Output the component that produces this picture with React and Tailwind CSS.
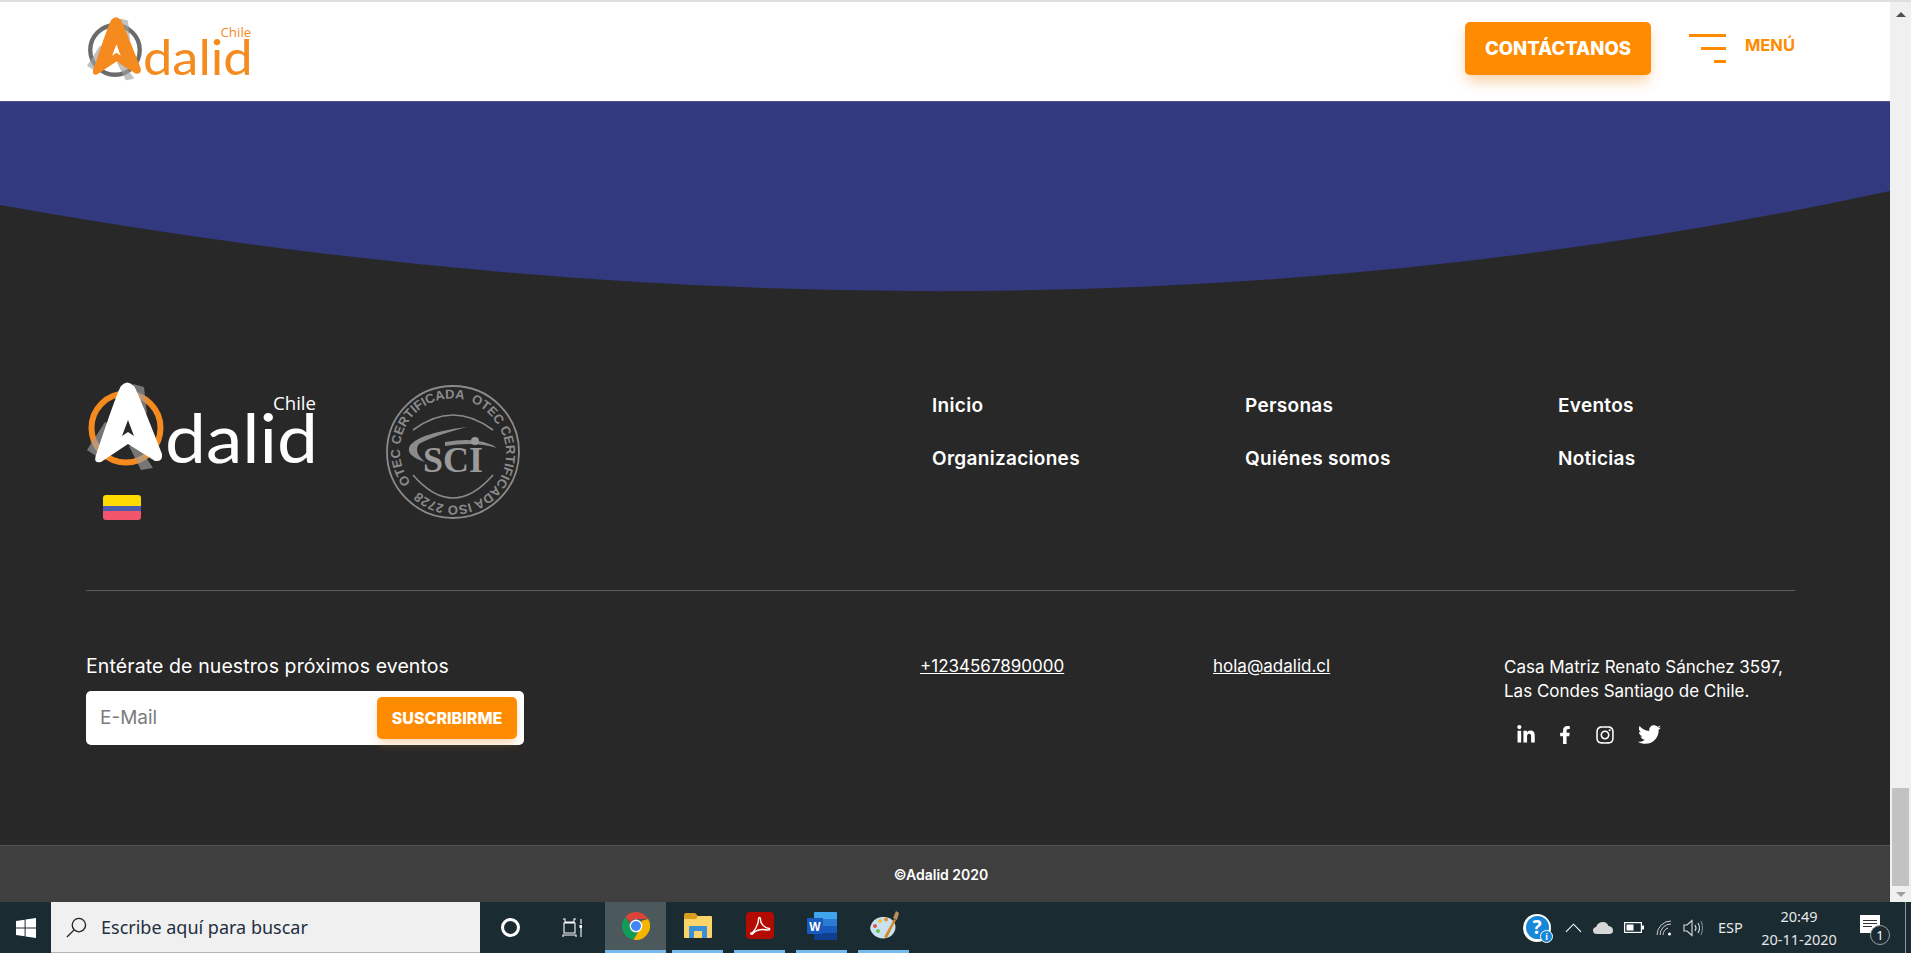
import React from "react";
import { FaLinkedinIn, FaFacebookF, FaInstagram, FaTwitter } from "react-icons/fa";

const navLinks = ["Inicio", "Personas", "Eventos", "Organizaciones", "Quiénes somos", "Noticias"];

function Logo({ className, ring, arrow, notch, word }) {
  return (
    <svg viewBox="0 0 230 92" className={className}>
      <circle cx="39" cy="46" r="34.5" fill="none" stroke={ring} strokeWidth="6" />
      <path d="M0 68 L18 40 L26 44 L12 76 Z" fill="#a0a0a0" opacity="0.65" />
      <path d="M46 2 L57 5 L60 32 L52 24 Z" fill="#a0a0a0" opacity="0.65" />
      <path d="M42 64 L50 62 L66 86 L54 88 Z" fill="#a0a0a0" opacity="0.65" />
      <path
        d="M34 4 Q40 -3 47 4 Q50 8 75 72 Q76 80 68 79 L41 62 L14 80 Q6 82 9 73 Q30 10 34 4 Z"
        fill={arrow}
      />
      <path d="M41 38 L47 54 L41 50 L35 54 Z" fill={notch} />
      <text x="78" y="81" fill={word} fontFamily="Lato, sans-serif" fontSize="68" textLength="153" lengthAdjust="spacingAndGlyphs">
        dalid
      </text>
      <text x="186" y="28" fill={word} fontFamily="'Open Sans', sans-serif" fontSize="18.5" textLength="43" lengthAdjust="spacingAndGlyphs">
        Chile
      </text>
    </svg>
  );
}

function SciSeal() {
  return (
    <svg viewBox="0 0 136 136" className="w-[136px] h-[136px]">
      <defs>
        <path id="seal-ring" d="M26 98.6 A52 52 0 1 1 110 37.4 A52 52 0 1 1 26 98.6" />
      </defs>
      <circle cx="68" cy="68" r="66" fill="none" stroke="#8b8b8b" strokeWidth="1.8" />
      <text fill="#8b8b8b" fontFamily="'Liberation Sans', sans-serif" fontSize="13" fontWeight="700" className="whitespace-pre">
        <textPath href="#seal-ring" textLength="322">OTEC CERTIFICADA  OTEC CERTIFICADA ISO 2728</textPath>
      </text>
      <path d="M28 46 Q68 16 108 46" fill="none" stroke="#8b8b8b" strokeWidth="1.6" />
      <path d="M28 91 Q68 137 108 91" fill="none" stroke="#8b8b8b" strokeWidth="1.6" />
      <path d="M24 64 Q28 50 82 43 Q48 52 34 60 Q28 68 40 78 Q22 72 24 64 Z" fill="#8b8b8b" />
      <path d="M60 58 Q95 52 112 64 Q90 57 60 62 Z" fill="#8b8b8b" />
      <text x="38" y="88" fill="#9a9a9a" fontFamily="'Liberation Serif', serif" fontWeight="700" fontSize="35" textLength="60" lengthAdjust="spacingAndGlyphs">
        SCI
      </text>
      <circle cx="90" cy="57" r="4" fill="#9a9a9a" />
    </svg>
  );
}

function WindowsIcon() {
  return (
    <svg viewBox="0 0 20 20" className="w-5 h-5" fill="#fff">
      <path d="M0 3 L8.6 1.7 V9.4 H0 Z M9.6 1.6 L20 0 V9.4 H9.6 Z M0 10.5 H8.6 V18.3 L0 17 Z M9.6 10.5 H20 V20 L9.6 18.4 Z" />
    </svg>
  );
}

function ChromeIcon() {
  return (
    <svg viewBox="0 0 28 28" className="w-7 h-7">
      <path d="M14 0 A14 14 0 0 1 26.1 7 H14 A7 7 0 0 0 7.9 10.5 L3.4 4.9 A14 14 0 0 1 14 0 Z" fill="#db4437" />
      <path d="M3.4 4.9 L9.9 16 A7 7 0 0 0 15 20.9 L11.5 27.8 A14 14 0 0 1 3.4 4.9 Z" fill="#0f9d58" />
      <path d="M26.1 7 A14 14 0 0 1 11.5 27.8 L17.9 17 A7 7 0 0 0 19 9 Z" fill="#f4b400" />
      <circle cx="14" cy="14" r="6.4" fill="#fff" />
      <circle cx="14" cy="14" r="5" fill="#4285f4" />
    </svg>
  );
}

function ExplorerIcon() {
  return (
    <svg viewBox="0 0 28 26" className="w-7 h-[26px]">
      <path d="M0 2 Q0 0 2 0 H11 L14 3 V8 H0 Z" fill="#d99e1f" />
      <path d="M0 6 H12 L14 3 H27 Q28 3 28 4 V24 Q28 25 27 25 H1 Q0 25 0 24 Z" fill="#fbd567" />
      <path d="M5 25 V14 Q5 13 6 13 H22 Q23 13 23 14 V25 H18 V18 H10 V25 Z" fill="#3a8fd6" />
      <path d="M10 21 H18 V25 H10 Z" fill="#fbd567" />
    </svg>
  );
}

function AcrobatIcon() {
  return (
    <svg viewBox="0 0 28 28" className="w-7 h-7">
      <rect width="28" height="27" rx="4" fill="#b30b00" />
      <path
        d="M5 21 C8 21 13 11 12.5 7 C12.3 5 14.6 5 14.5 7.5 C14.4 11 18 16 23 16.5 C24.5 17 23.5 18.5 21.5 18 C16 17 10 18 7 21.5 C6 23 4 22 5 21 Z"
        fill="none"
        stroke="#fff"
        strokeWidth="1.4"
      />
    </svg>
  );
}

function WordIcon() {
  return (
    <svg viewBox="0 0 30 28" className="w-[30px] h-7">
      <path d="M7 1 Q7 0 8 0 H29 Q30 0 30 1 V7 H7 Z" fill="#41a5ee" />
      <rect x="7" y="7" width="23" height="7" fill="#2b7cd3" />
      <rect x="7" y="14" width="23" height="7" fill="#185abd" />
      <path d="M7 21 H30 V27 Q30 28 29 28 H8 Q7 28 7 27 Z" fill="#103f91" />
      <rect x="0" y="6" width="16" height="16" rx="1" fill="#185abd" />
      <text x="8" y="18.5" textAnchor="middle" fill="#fff" fontFamily="'Liberation Sans', sans-serif" fontWeight="700" fontSize="12">
        W
      </text>
    </svg>
  );
}

function PaintIcon() {
  return (
    <svg viewBox="0 0 30 30" className="w-[30px] h-[30px]">
      <path d="M2 14 C5 6 15 4 22 8 C28 12 28 20 22 25 C17 29 8 28 4 23 C2 20 0 18 2 14 Z" fill="#c9e2ef" />
      <circle cx="6" cy="15" r="2" fill="#e0584d" />
      <circle cx="11" cy="10" r="2" fill="#e8c23c" />
      <circle cx="9" cy="20" r="2" fill="#6cbb54" />
      <circle cx="17" cy="8.5" r="2" fill="#e98a3b" />
      <path d="M15 26 L25 8 L27 9 L18 27 Z" fill="#d9862b" />
      <path d="M24 7 L27 0 L30 2 L28 9 Z" fill="#b98f5b" />
    </svg>
  );
}

function TaskbarApp({ children, active }) {
  return (
    <div className={`h-full flex items-center justify-center border-b-[3px] border-[#76b9ed] ${active ? "w-[61px] bg-[#4b585c] -mr-[5px]" : "w-[51px]"}`}>
      {children}
    </div>
  );
}

function Taskbar() {
  return (
    <div className="relative h-[51px] bg-[#1a2b31] flex items-center text-white font-['Noto_Sans',sans-serif] shrink-0">
      <div className="w-[51px] flex justify-center">
        <WindowsIcon />
      </div>
      <div className="w-[429px] h-full bg-[#f0f0f0] flex items-center pl-[15px] border-b border-[#b5b5b5]">
        <svg viewBox="0 0 22 22" className="w-[21px] h-[21px]" fill="none" stroke="#222" strokeWidth="1.4">
          <circle cx="13.5" cy="8.5" r="7" />
          <path d="M8.5 13.5 L1 21" />
        </svg>
        <span className="ml-[14px] text-[18px] text-[#1f2f3f]">Escribe aquí para buscar</span>
      </div>
      <div className="w-[61px] flex justify-center">
        <div className="w-[19px] h-[19px] rounded-full border-[3px] border-white" />
      </div>
      <div className="w-[64px] flex justify-center pr-[3px]">
        <svg viewBox="0 0 20 20" className="w-5 h-5" fill="none" stroke="#fff" strokeWidth="1.1">
          <path d="M1 1 H3 V4 H12 V1 H14 M2 5 H13 V15 H2 Z M1 19 V17 H14 V19 M19 1 V6 M19 10 V19" />
          <rect x="17.5" y="7" width="3" height="3" fill="#fff" stroke="none" />
        </svg>
      </div>
      <div className="h-full flex gap-[11px]">
        <TaskbarApp active>
          <ChromeIcon />
        </TaskbarApp>
        <TaskbarApp>
          <ExplorerIcon />
        </TaskbarApp>
        <TaskbarApp>
          <AcrobatIcon />
        </TaskbarApp>
        <TaskbarApp>
          <WordIcon />
        </TaskbarApp>
        <TaskbarApp>
          <PaintIcon />
        </TaskbarApp>
      </div>
      <div className="ml-auto flex items-center h-full pr-[31px]">
        <div className="relative w-[28px] h-[28px] rounded-full bg-white flex items-center justify-center mr-[14px]">
          <div className="w-[23px] h-[23px] rounded-full bg-[#1787d8] flex items-center justify-center text-[19px] font-bold leading-none">?</div>
          <div className="absolute -right-[2px] -bottom-[1px] w-[13px] h-[13px] rounded-full bg-[#1787d8] border border-white flex items-center justify-center text-[9px] font-bold leading-none">i</div>
        </div>
        <svg viewBox="0 0 18 10" className="w-[17px] h-[10px] mr-[11px]" fill="none" stroke="#fff" strokeWidth="1.2">
          <path d="M1 9 L9 1 L17 9" />
        </svg>
        <svg viewBox="0 0 20 12" className="w-5 h-3 mr-[11px]" fill="#d7d7d7">
          <path d="M4 12 Q0 12 0 8.5 Q0 5.5 3 5 Q5 0 10 0 Q14 0 15.5 4 Q20 4.5 20 8.5 Q20 12 16 12 Z" />
        </svg>
        <svg viewBox="0 0 20 11" className="w-5 h-[11px] mr-[12px]" fill="none" stroke="#fff" strokeWidth="1.2">
          <rect x="0.6" y="0.6" width="16.8" height="9.8" />
          <rect x="2.5" y="2.5" width="7" height="6" fill="#fff" stroke="none" />
          <rect x="18" y="3.5" width="2" height="4" fill="#fff" stroke="none" />
        </svg>
        <svg viewBox="0 0 16 16" className="w-4 h-4 mr-[11px]" fill="none" stroke="#cfcfcf" strokeWidth="1">
          <path d="M1 15 A14 14 0 0 1 15 1 M4 15 A11 11 0 0 1 15 4 M7 15 A8 8 0 0 1 12 8" />
          <circle cx="13.5" cy="14" r="1.5" fill="#fff" stroke="none" />
        </svg>
        <svg viewBox="0 0 20 18" className="w-5 h-[18px] mr-[15px]" fill="none" stroke="#dcdcdc" strokeWidth="1.1">
          <path d="M1 6 H4 L9 1.5 V16.5 L4 12 H1 Z" />
          <path d="M12 6 Q14 9 12 12 M15 4 Q18 9 15 14" />
          <path d="M18 2 Q21 9 18 16" stroke="#7b868a" />
        </svg>
        <span className="text-[14.5px] w-[43px] text-[#e8e8e8]">ESP</span>
        <div className="flex flex-col items-center text-[14.5px] leading-[23px] text-[#e8e8e8] w-[76px] mr-[23px] whitespace-nowrap">
          <span>20:49</span>
          <span>20-11-2020</span>
        </div>
        <div className="relative w-[20px] h-[18px] bg-white mb-[7px]">
          <div className="mt-[5px] mx-[3px] flex flex-col gap-[2px]">
            <div className="h-px bg-[#333]" />
            <div className="h-px bg-[#333]" />
            <div className="h-px w-2/3 bg-[#333]" />
          </div>
          <div className="absolute left-[10px] top-[10px] w-[20px] h-[20px] rounded-full bg-[#1a2b31] border border-[#9aa3a6] flex items-center justify-center text-[13px] leading-none">1</div>
        </div>
      </div>
      <div className="absolute right-[5px] top-0 h-full w-px bg-[#8a9498]" />
    </div>
  );
}

function Header() {
  return (
    <div className="h-[100px] bg-white border-b border-[#4a5290] flex items-start pl-[87px] pr-[95px] shrink-0">
      <Logo className="w-[165px] h-[66px] mt-[15px]" ring="#6b6b6b" arrow="#f58a1f" notch="#ffffff" word="#f58a1f" />
      <button className="ml-auto mt-[20px] w-[186px] h-[53px] rounded-[5px] bg-[#ff8c00] text-white font-['Inter',sans-serif] font-extrabold text-[18.5px] shadow-[0_8px_14px_-2px_rgba(240,150,50,0.45)]">
        CONTÁCTANOS
      </button>
      <div className="ml-[38px] mt-[32px] w-[37px] flex flex-col items-end gap-[10px]">
        <div className="h-[3px] w-[37px] bg-[#ff8c00]" />
        <div className="h-[3px] w-[25px] bg-[#ff8c00]" />
        <div className="h-[3px] w-[12px] bg-[#ff8c00]" />
      </div>
      <span className="ml-[19px] mt-[34px] text-[#ff8c00] font-['Inter',sans-serif] font-bold text-[16.5px] leading-[18px]">MENÚ</span>
    </div>
  );
}

function FooterTop() {
  return (
    <div className="flex items-start h-[209px] border-b border-[#5c5c5c]">
      <div className="w-[299px]">
        <Logo className="w-[230px] h-[92px] ml-px" ring="#f58a1f" arrow="#ffffff" notch="#282828" word="#ffffff" />
        <div className="ml-[17px] mt-[21px] w-[38px] h-[25px] rounded-[3px] overflow-hidden flex flex-col">
          <div className="h-[11px] bg-[#ffda00]" />
          <div className="h-[5px] bg-[#4a5cab]" />
          <div className="flex-1 bg-[#f2556b]" />
        </div>
      </div>
      <div className="mt-[2px]">
        <SciSeal />
      </div>
      <div className="ml-[411px] grid grid-cols-[313px_313px_auto] gap-y-[31px] mt-[13px] text-white font-['Inter',sans-serif] font-semibold text-[19px] tracking-[0.3px] leading-[22px]">
        {navLinks.map((link) => (
          <span key={link}>{link}</span>
        ))}
      </div>
    </div>
  );
}

function FooterBottom() {
  return (
    <div className="flex items-start pt-[64px] text-white font-['Inter',sans-serif]">
      <div className="w-[834px]">
        <p className="text-[19.5px] leading-[22px] tracking-[0.1px]">Entérate de nuestros próximos eventos</p>
        <div className="mt-[14px] w-[438px] h-[54px] rounded-[5px] bg-white flex items-center pl-[14px] pr-[7px]">
          <span className="text-[#7b7b7b] text-[19px]">E-Mail</span>
          <button className="ml-auto w-[140px] h-[42px] rounded-[5px] bg-[#ff8c00] text-white font-extrabold text-[16px] shadow-[0_6px_10px_-2px_rgba(240,150,50,0.4)]">
            SUSCRIBIRME
          </button>
        </div>
      </div>
      <a className="w-[293px] underline text-[17px] leading-[22px]">+1234567890000</a>
      <a className="w-[291px] underline text-[17px] leading-[22px]">hola@adalid.cl</a>
      <div className="text-[17px] leading-[24px] whitespace-nowrap">
        <p>Casa Matriz Renato Sánchez 3597,</p>
        <p>Las Condes Santiago de Chile.</p>
        <div className="flex items-center mt-[20px] pl-[12px]">
          <FaLinkedinIn className="w-5 h-5" />
          <FaFacebookF className="w-[18px] h-[18px] ml-[20px]" />
          <FaInstagram className="w-5 h-5 ml-[21px]" />
          <FaTwitter className="w-[23px] h-[23px] ml-[23px]" />
        </div>
      </div>
    </div>
  );
}

export default function App() {
  return (
    <div className="w-[1911px] h-[953px] overflow-hidden flex flex-col bg-[#282828]">
      <div className="h-[2px] bg-[#dedee3] shrink-0" />
      <div className="flex-1 flex min-h-0">
        <div className="flex-1 flex flex-col min-w-0">
          <Header />
          <svg viewBox="0 0 1890 195" preserveAspectRatio="none" className="w-full h-[195px] block shrink-0">
            <rect width="1890" height="195" fill="#33397f" />
            <path d="M0 103 Q1000 282 1890 89 V195 H0 Z" fill="#282828" />
          </svg>
          <div className="flex-1 pl-[86px] pr-[95px] pt-[85px]">
            <FooterTop />
            <FooterBottom />
          </div>
          <div className="h-[57px] bg-[#3f3f3f] border-t border-[#555] flex items-center justify-center pr-[8px] text-white font-['Inter',sans-serif] font-semibold text-[14px] shrink-0">
            ©Adalid 2020
          </div>
        </div>
        <div className="w-[21px] bg-[#f0f0f0] flex flex-col items-center shrink-0">
          <div className="mt-[10px] w-0 h-0 border-x-[5px] border-x-transparent border-b-[5px] border-b-[#505050]" />
          <div className="mt-auto w-[17px] h-[98px] bg-[#c2c2c2]" />
          <div className="mt-[6px] mb-[5px] w-0 h-0 border-x-[5px] border-x-transparent border-t-[5px] border-t-[#a0a0a0]" />
        </div>
      </div>
      <Taskbar />
    </div>
  );
}
